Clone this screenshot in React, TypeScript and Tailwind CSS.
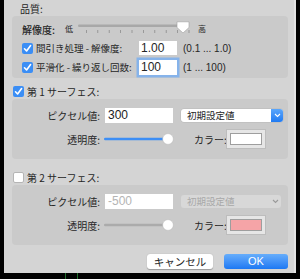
import React from "react";

const jp = { fontFamily: '"Noto Sans CJK JP", "Noto Sans", sans-serif' };
const num = { fontFamily: '"Liberation Sans", Arial, sans-serif' };

function Check({ on }: { on: boolean }) {
  return on ? (
    <span className="flex h-[11px] w-[11px] shrink-0 items-center justify-center rounded-[2px] bg-[#3b8ef5]">
      <svg width="9" height="9" viewBox="0 0 9 9">
        <path d="M1.5 4.8 L3.6 7 L7.6 1.6" fill="none" stroke="white" strokeWidth="1.6" strokeLinecap="round" strokeLinejoin="round" />
      </svg>
    </span>
  ) : (
    <span className="h-[11px] w-[11px] shrink-0 rounded-[2px] border border-[#b5b5b5] bg-white" />
  );
}

function TickSlider() {
  const ticks = Array.from({ length: 10 }, (_, i) => 8 + i * 11.4);
  return (
    <svg width="112" height="16" viewBox="0 0 112 16">
      <rect x="0" y="3.5" width="110" height="2.5" rx="1.2" fill="#a8a8a8" />
      {ticks.map((t) => (
        <rect key={t} x={t} y="9" width="0.8" height="3" fill="#8c8c8c" />
      ))}
      <path d="M103 0.8 H115 V6.5 L109 12 L103 6.5 Z" fill="white" stroke="#a0a0a0" strokeWidth="0.6" transform="translate(-4 0)" />
    </svg>
  );
}

function RoundSlider({ active }: { active: boolean }) {
  return (
    <svg width="72" height="14" viewBox="0 0 72 14">
      <rect x="0" y="5.8" width="66" height="2.4" rx="1.2" fill={active ? "#3d8ef5" : "#ababab"} />
      <circle cx="64" cy="7" r="5.4" fill="white" stroke="#b3b3b3" strokeWidth="0.5" />
    </svg>
  );
}

function ColorWell({ color }: { color: string }) {
  return (
    <div className="flex h-[20px] w-[40px] items-center justify-center border border-[#bdbdbd] bg-[#e6e6e6]">
      <div className="h-[12px] w-[32px] border border-[#9e9e9e]" style={{ background: color }} />
    </div>
  );
}

function Surface({ disabled, value, color }: { disabled: boolean; value: string; color: string }) {
  return (
    <div className="ml-[8px] flex h-[60px] w-[276px] flex-col gap-[6px] rounded-[4px] bg-[#cacaca] pt-[8px]">
      <div className="flex h-[16px] items-center">
        <span className="w-[88px] whitespace-nowrap text-right text-[10px] text-[#262626]" style={jp}>ピクセル値:</span>
        <div
          className={`ml-[5px] flex h-[15px] w-[68px] items-center bg-white pl-[3px] text-[12px] ${disabled ? "text-[#b4b4b4]" : "text-[#1c1c1c]"}`}
          style={num}
        >
          {value}
        </div>
        <div
          className={`ml-[8px] flex h-[13px] items-center rounded-[3px] ${disabled ? "w-[100px] bg-[#d8d8d8]" : "w-[102px] bg-white shadow-[0_0_0_0.5px_#b8b8b8]"}`}
        >
          <span className={`flex-1 pl-[6px] text-[9.5px] ${disabled ? "text-[#a8a8a8]" : "text-[#262626]"}`} style={jp}>
            初期設定値
          </span>
          {disabled ? (
            <span className="flex h-[13px] w-[12px] items-center justify-center">
              <svg width="7" height="5" viewBox="0 0 7 5"><path d="M1 1 L3.5 3.5 L6 1" fill="none" stroke="#9a9a9a" strokeWidth="1.1" /></svg>
            </span>
          ) : (
            <span className="flex h-[13px] w-[12px] items-center justify-center rounded-r-[3px] bg-gradient-to-b from-[#5aa6fb] to-[#1f7af2]">
              <svg width="7" height="5" viewBox="0 0 7 5"><path d="M1 1 L3.5 3.5 L6 1" fill="none" stroke="white" strokeWidth="1.1" /></svg>
            </span>
          )}
        </div>
      </div>
      <div className="flex h-[20px] items-center">
        <span className="w-[88px] whitespace-nowrap text-right text-[10px] text-[#262626]" style={jp}>透明度:</span>
        <div className="ml-[4px] flex items-center">
          <RoundSlider active={!disabled} />
        </div>
        <span className="ml-[18px] w-[30px] whitespace-nowrap text-[10px] text-[#262626]" style={jp}>カラー:</span>
        <div className="ml-[2px]">
          <ColorWell color={color} />
        </div>
      </div>
    </div>
  );
}

export default function App() {
  return (
    <div className="flex h-[279px] w-[300px] flex-col bg-black">
      <div className="flex h-[273px]">
        <div className="w-[4px]" />
        <div className="flex h-[273px] w-[292px] flex-col border-r-2 border-[#e2e2e2] bg-[#d4d4d4] text-[#262626]">
          <div className="ml-[16px] mt-[2px] h-[14px] text-[10px] leading-[14px]" style={jp}>品質:</div>

          <div className="ml-[8px] flex h-[62px] w-[276px] flex-col gap-[1px] rounded-[4px] bg-[#cacaca] pt-[4px]">
            <div className="flex h-[18px] items-center pl-[10px]">
              <span className="w-[43px] whitespace-nowrap text-[10px] font-medium" style={jp}>解像度:</span>
              <span className="w-[13px] text-[8px]" style={jp}>低</span>
              <TickSlider />
              <span className="ml-[8px] text-[8px]" style={jp}>高</span>
            </div>
            <div className="flex h-[18px] items-center pl-[10px]">
              <Check on />
              <span className="ml-[3px] w-[103px] whitespace-nowrap text-[9.5px]" style={jp}>間引き処理 - 解像度:</span>
              <div className="flex h-[14px] w-[38px] items-center bg-white pl-[2px] text-[12px]" style={num}>1.00</div>
              <span className="ml-[6px] text-[10px]" style={num}>(0.1 ... 1.0)</span>
            </div>
            <div className="flex h-[18px] items-center pl-[10px]">
              <Check on />
              <span className="ml-[3px] w-[103px] whitespace-nowrap text-[9.5px]" style={jp}>平滑化 - 繰り返し回数:</span>
              <div className="flex h-[15px] w-[38px] items-center bg-white pl-[2px] text-[12px] shadow-[0_0_0_2.5px_#86b3ea]" style={num}>100</div>
              <span className="ml-[6px] text-[10px]" style={num}>(1 ... 100)</span>
            </div>
          </div>

          <div className="ml-[9px] mt-[6px] flex h-[14px] items-center">
            <Check on />
            <span className="ml-[3px] whitespace-nowrap text-[10px]" style={jp}>第 1 サーフェス:</span>
          </div>
          <div className="mt-[1px]">
            <Surface disabled={false} value="300" color="#ffffff" />
          </div>

          <div className="ml-[9px] mt-[11px] flex h-[14px] items-center">
            <Check on={false} />
            <span className="ml-[3px] whitespace-nowrap text-[10px]" style={jp}>第 2 サーフェス:</span>
          </div>
          <div className="mt-[1px]">
            <Surface disabled value="-500" color="#f5a4a7" />
          </div>

          <div className="mt-[9px] flex h-[15px] items-center pl-[143px]">
            <button className="flex h-[15px] w-[66px] items-center justify-center rounded-[3px] bg-white text-[10.5px] shadow-[0_0.5px_1px_#9a9a9a]" style={jp}>
              キャンセル
            </button>
            <button className="ml-[11px] flex h-[15px] w-[64px] items-center justify-center rounded-[3px] bg-gradient-to-b from-[#66adfb] to-[#1b78f3] text-[11px] text-white" style={num}>
              OK
            </button>
          </div>
        </div>
      </div>
      <div className="flex h-[6px]">
        <div className="ml-[65px] w-[1px] bg-[#1d6b2a]" />
        <div className="ml-[11px] w-[1px] bg-[#1d6b2a]" />
      </div>
    </div>
  );
}
